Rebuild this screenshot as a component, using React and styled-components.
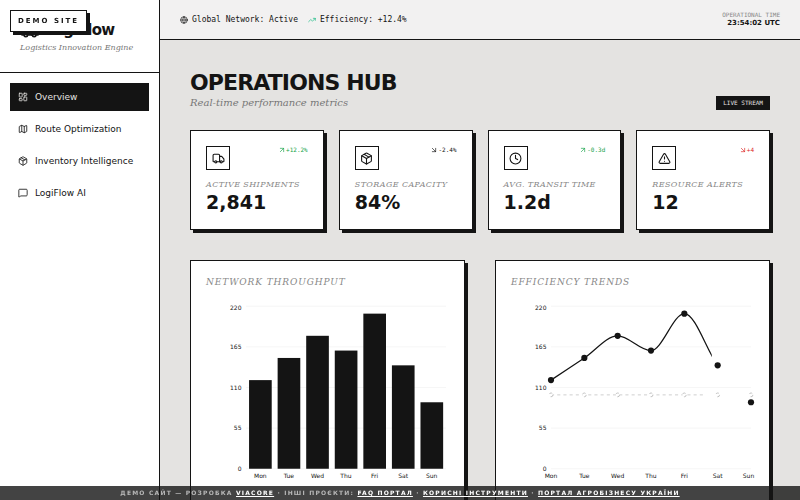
import React from "react";
import styled, {createGlobalStyle} from "styled-components";
import {
    ArrowDownRight,
    ArrowUpRight,
    Clock,
    Globe,
    LayoutDashboard,
    Map,
    MessageSquare,
    Package,
    TrendingUp,
    TriangleAlert,
    Truck
} from "lucide-react";

const ink = "#141414";
const sans = '"DejaVu Sans", sans-serif';
const serif = '"DejaVu Serif", serif';
const mono = '"DejaVu Sans Mono", monospace';

const GlobalStyle = createGlobalStyle`
  * {
    box-sizing: border-box;
  }

  body {
    margin: 0;
    background: #e4e3e1;
    color: ${ink};
    font-family: ${sans};
  }

  h1, h2, p {
    margin: 0;
  }

  svg {
    flex-shrink: 0;
  }
`;

const Layout = styled.div`
  display: flex;
  height: 100vh;
  overflow: hidden;
`;

const Sidebar = styled.aside`
  flex: 0 0 160px;
  background: #fff;
  border-right: 1px solid ${ink};
`;

const Brand = styled.div`
  padding: 20px 20px 19px;
  border-bottom: 1px solid ${ink};
`;

const Logo = styled.div`
  display: flex;
  align-items: center;
  gap: 5px;
  font-size: 15px;
  line-height: 20px;
  font-weight: bold;
  letter-spacing: -0.05em;
`;

const Tagline = styled.p`
  margin-top: 2px;
  color: #777;
  font: italic 8px/11px ${serif};
  white-space: nowrap;
`;

const Nav = styled.nav`
  display: flex;
  flex-direction: column;
  gap: 4px;
  padding: 10px;
`;

const NavButton = styled.button`
  display: flex;
  align-items: center;
  gap: 7px;
  height: 28px;
  padding: 0 8px;
  border: 0;
  background: ${({$active}) => ($active ? ink : "transparent")};
  color: ${({$active}) => ($active ? "#e4e3e1" : ink)};
  font: 9px/12px ${sans};
  text-align: left;
  cursor: pointer;
`;

const Main = styled.main`
  flex: 1;
  min-width: 0;
  overflow-y: auto;
  scrollbar-width: none;
`;

const TopBar = styled.header`
  display: flex;
  align-items: center;
  justify-content: space-between;
  height: 40px;
  padding: 0 20px;
  background: #f2f1f1;
  border-bottom: 1px solid ${ink};
`;

const StatusList = styled.div`
  display: flex;
  gap: 10px;
`;

const Status = styled.span`
  display: flex;
  align-items: center;
  gap: 4px;
  font: 8px/10px ${mono};
`;

const Time = styled.div`
  text-align: right;
  font-size: 7px;
  line-height: 9px;
  font-weight: bold;
`;

const TimeLabel = styled.div`
  color: #888;
  font: 6px/8px ${mono};
`;

const Content = styled.div`
  padding: 30px;
`;

const PageHead = styled.div`
  display: flex;
  align-items: flex-end;
  justify-content: space-between;
  margin-bottom: 20px;
`;

const PageTitle = styled.h1`
  font-size: 22px;
  line-height: 25px;
  letter-spacing: -0.04em;
`;

const PageSubtitle = styled.p`
  color: #777;
  font: italic 10px/15px ${serif};
`;

const LiveTag = styled.span`
  padding: 3px 7px;
  background: ${ink};
  color: #e4e3e1;
  font: 6px/8px ${mono};
`;

const StatGrid = styled.div`
  display: grid;
  grid-template-columns: repeat(4, 1fr);
  gap: 15px;
  margin-bottom: 30px;
`;

const ChartGrid = styled.div`
  display: grid;
  grid-template-columns: repeat(2, 1fr);
  gap: 30px;
`;

const Card = styled.section`
  min-width: 0;
  padding: 15px;
  background: #fff;
  border: 1px solid ${ink};
  box-shadow: 3px 3px 0 ${ink};
`;

const StatHead = styled.div`
  display: flex;
  align-items: flex-start;
  justify-content: space-between;
  margin-bottom: 10px;
`;

const IconBox = styled.div`
  display: grid;
  place-items: center;
  width: 24px;
  height: 24px;
  border: 1px solid ${ink};
`;

const Trend = styled.span`
  display: flex;
  align-items: center;
  color: ${({$color}) => $color};
  font: 6px/8px ${mono};
`;

const StatLabel = styled.p`
  color: #888;
  font: italic 8px/10px ${serif};
  letter-spacing: 0.05em;
  text-transform: uppercase;
  white-space: nowrap;
`;

const StatValue = styled.p`
  font-size: 19px;
  line-height: 24px;
  font-weight: bold;
`;

const ChartTitle = styled.h2`
  margin-bottom: 15px;
  color: #888;
  font: italic 9px/12px ${serif};
  letter-spacing: 0.1em;
  text-transform: uppercase;
`;

const ChartSvg = styled.svg`
  display: block;
  width: 100%;
  height: auto;
  overflow: visible;

  text {
    fill: ${ink};
    font: 6px ${sans};
  }
`;

const DemoBadge = styled.div`
  position: fixed;
  top: 10px;
  left: 10px;
  padding: 5px 7px;
  background: #fff;
  border: 1px solid ${ink};
  box-shadow: 3px 3px 0 ${ink};
  font-size: 7px;
  line-height: 10px;
  font-weight: bold;
  letter-spacing: 2px;
`;

const DemoBar = styled.footer`
  position: fixed;
  right: 0;
  bottom: 0;
  left: 0;
  padding: 2px 10px;
  background: rgba(20, 20, 20, 0.8);
  color: #b8b8b8;
  font-size: 6px;
  line-height: 10px;
  font-weight: bold;
  letter-spacing: 0.2em;
  text-align: center;
  text-transform: uppercase;

  a {
    color: #fff;
    text-underline-offset: 1px;
  }
`;

const navItems = [
    {label: "Overview", icon: LayoutDashboard},
    {label: "Route Optimization", icon: Map},
    {label: "Inventory Intelligence", icon: Package},
    {label: "LogiFlow AI", icon: MessageSquare}
];

const stats = [
    {label: "Active Shipments", value: "2,841", change: "+12.2%", up: true, color: "#16a34a", icon: Truck},
    {label: "Storage Capacity", value: "84%", change: "-2.4%", up: false, color: ink, icon: Package},
    {label: "Avg. Transit Time", value: "1.2d", change: "-0.3d", up: true, color: "#16a34a", icon: Clock},
    {label: "Resource Alerts", value: "12", change: "+4", up: false, color: "#dc2626", icon: TriangleAlert}
];

const days = [
    {name: "Mon", value: 120},
    {name: "Tue", value: 150},
    {name: "Wed", value: 180},
    {name: "Thu", value: 160},
    {name: "Fri", value: 210},
    {name: "Sat", value: 140},
    {name: "Sun", value: 90}
];

const ticks = [0, 55, 110, 165, 220];
const plotLeft = 40;
const plotWidth = 200;
const toY = (value) => 165.75 - (value / 220) * 162.5;

// monotone cubic through evenly spaced points
const curvePath = (points) => {
    const step = points[1].x - points[0].x;
    const slopes = points.slice(1).map((p, i) => (p.y - points[i].y) / step);
    const last = slopes.length - 1;
    const inner = slopes.slice(1).map((s, i) => {
        const prev = slopes[i];
        if (prev * s <= 0) {
            return 0;
        }
        return Math.sign(s) * Math.min(Math.abs(prev), Math.abs(s), Math.abs(prev + s) / 4) * 2;
    });
    const first = (3 * slopes[0] - inner[0]) / 2;
    const end = (3 * slopes[last] - inner[inner.length - 1]) / 2;
    const tangents = [first, ...inner, end];

    return points.slice(1).reduce((d, p, i) => {
        const from = points[i];
        const third = step / 3;
        return d + `C${from.x + third},${from.y + third * tangents[i]} ${p.x - third},${p.y - third * tangents[i + 1]} ${p.x},${p.y}`;
    }, `M${points[0].x},${points[0].y}`);
};

const Axis = () => (
    <g>
        {ticks.map(tick => (
            <g key={tick}>
                <line x1={plotLeft} x2={plotLeft + plotWidth} y1={toY(tick)} y2={toY(tick)}
                      stroke="#f0f0f0" strokeWidth="0.6"/>
                <text x="35.5" y={Math.max(toY(tick), 4.5) + 2.2} textAnchor="end">{tick}</text>
            </g>
        ))}
    </g>
);

const ThroughputChart = () => {
    const band = plotWidth / days.length;

    return (
        <ChartSvg viewBox="0 0 243 188" role="img" aria-label="Network throughput">
            <Axis/>
            {days.map((day, i) => (
                <g key={day.name}>
                    <rect x={plotLeft + band * (i + 0.1) + 0.2} y={toY(day.value)} width={band * 0.8 - 0.2}
                          height={toY(0) - toY(day.value)} fill={ink}/>
                    <text x={plotLeft + band * (i + 0.5)} y="175" textAnchor="middle">{day.name}</text>
                </g>
            ))}
        </ChartSvg>
    );
};

const TrendsChart = () => {
    const points = days.map((day, i) => ({
        x: plotLeft + (plotWidth / (days.length - 1)) * i,
        y: toY(day.value),
        name: day.name
    }));

    return (
        <ChartSvg viewBox="0 0 243 188" role="img" aria-label="Efficiency trends">
            <clipPath id="drawn">
                <rect x="0" y="0" width="200.8" height="188"/>
            </clipPath>
            <Axis/>
            <line x1={plotLeft} x2="194" y1={toY(100)} y2={toY(100)}
                  stroke="#bbb" strokeWidth="0.7" strokeDasharray="3.1 3.1"/>
            <path d={curvePath(points)} fill="none" stroke={ink} strokeWidth="1.25" clipPath="url(#drawn)"/>
            {points.map(point => (
                <g key={point.name}>
                    <circle cx={point.x} cy={toY(100)} r="1.9" fill="#fff" stroke="#aaa"
                            strokeWidth="0.7" strokeDasharray="3.1 3.1"/>
                    <circle cx={point.x} cy={point.y} r="3.1" fill={ink}/>
                    <text x={Math.min(point.x, 237.5)} y="175" textAnchor="middle">{point.name}</text>
                </g>
            ))}
        </ChartSvg>
    );
};

const StatCard = ({stat}) => {
    const Icon = stat.icon;
    const Arrow = stat.up ? ArrowUpRight : ArrowDownRight;

    return (
        <Card>
            <StatHead>
                <IconBox><Icon size={13}/></IconBox>
                <Trend $color={stat.color}><Arrow size={8}/>{stat.change}</Trend>
            </StatHead>
            <StatLabel>{stat.label}</StatLabel>
            <StatValue>{stat.value}</StatValue>
        </Card>
    );
};

const App = () => (
    <>
        <GlobalStyle/>
        <Layout>
            <Sidebar>
                <Brand>
                    <Logo><Truck size={20}/>LogiFlow</Logo>
                    <Tagline>Logistics Innovation Engine</Tagline>
                </Brand>
                <Nav>
                    {navItems.map(({label, icon: Icon}, i) => (
                        <NavButton key={label} type="button" $active={i === 0}>
                            <Icon size={10}/>{label}
                        </NavButton>
                    ))}
                </Nav>
            </Sidebar>
            <Main>
                <TopBar>
                    <StatusList>
                        <Status><Globe size={8}/>Global Network: Active</Status>
                        <Status><TrendingUp size={8} color="#10b981"/>Efficiency: +12.4%</Status>
                    </StatusList>
                    <Time>
                        <TimeLabel>OPERATIONAL TIME</TimeLabel>
                        23:54:02 UTC
                    </Time>
                </TopBar>
                <Content>
                    <PageHead>
                        <div>
                            <PageTitle>OPERATIONS HUB</PageTitle>
                            <PageSubtitle>Real-time performance metrics</PageSubtitle>
                        </div>
                        <LiveTag>LIVE STREAM</LiveTag>
                    </PageHead>
                    <StatGrid>
                        {stats.map(stat => <StatCard key={stat.label} stat={stat}/>)}
                    </StatGrid>
                    <ChartGrid>
                        <Card>
                            <ChartTitle>Network Throughput</ChartTitle>
                            <ThroughputChart/>
                        </Card>
                        <Card>
                            <ChartTitle>Efficiency Trends</ChartTitle>
                            <TrendsChart/>
                        </Card>
                    </ChartGrid>
                </Content>
            </Main>
        </Layout>
        <DemoBadge>DEMO SITE</DemoBadge>
        <DemoBar>
            Демо сайт — розробка <a href="#viacore">Viacore</a> · Інші проєкти: <a href="#faq">FAQ портал</a> · <a
            href="#tools">Корисні інструменти</a> · <a href="#agro">Портал агробізнесу України</a>
        </DemoBar>
    </>
);

export default App;
